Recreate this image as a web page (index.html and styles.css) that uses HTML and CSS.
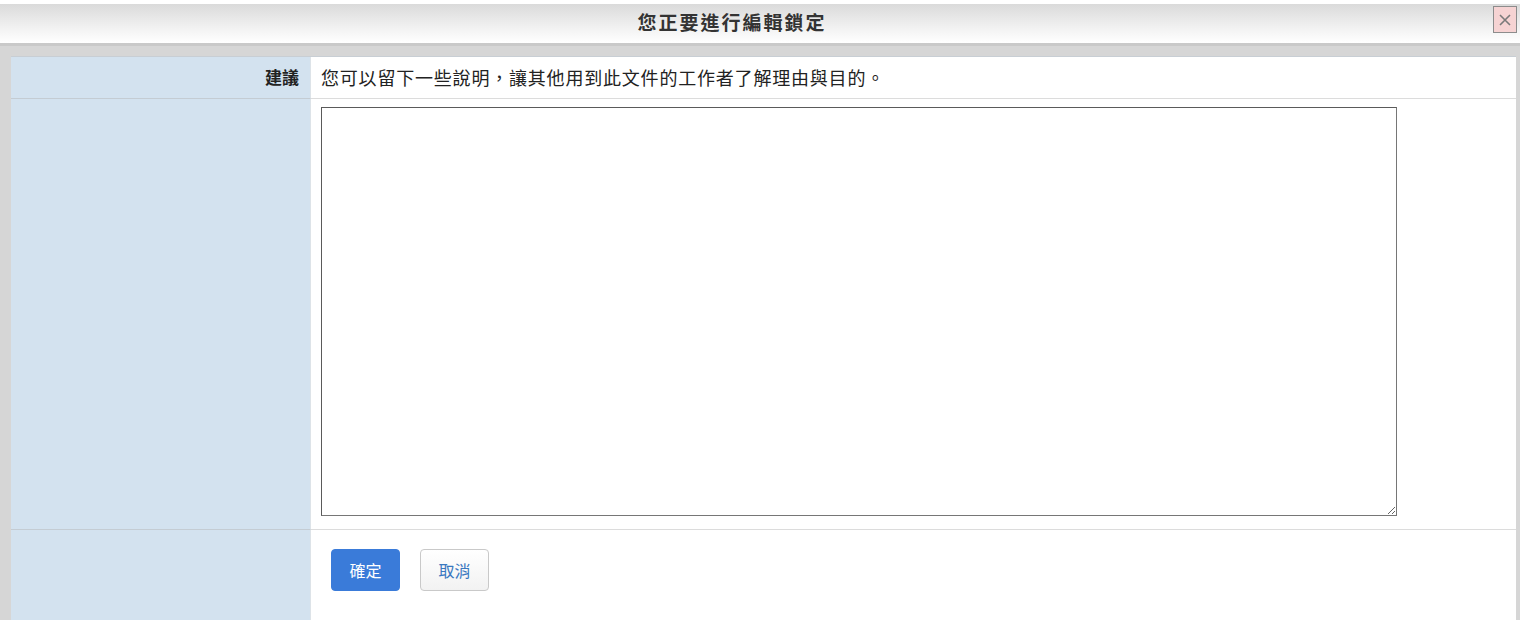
FILE: index.html
```html
<!DOCTYPE html>
<html lang="zh-Hant">
<head>
<meta charset="utf-8">
<title>您正要進行編輯鎖定</title>
<link rel="stylesheet" href="styles.css">
</head>
<body>
<div class="dialog">
  <div class="titlebar">
    <div class="title">您正要進行編輯鎖定</div>
    <button class="close" type="button" aria-label="關閉">
      <svg width="14" height="14" viewBox="0 0 14 14"><path d="M2 2L12 12M12 2L2 12" stroke="#7a7a7a" stroke-width="1.6" fill="none"/></svg>
    </button>
  </div>
  <div class="frame">
    <div class="form">
      <div class="label">建議</div>
      <div class="value hint">您可以留下一些說明，讓其他用到此文件的工作者了解理由與目的。</div>
      <div class="label"></div>
      <div class="value area-cell"><textarea class="note"></textarea></div>
      <div class="label last"></div>
      <div class="value actions last">
        <button class="btn primary" type="button">確定</button>
        <button class="btn secondary" type="button">取消</button>
      </div>
    </div>
  </div>
</div>
</body>
</html>
```
FILE: styles.css
```css
* { box-sizing: border-box; }
html, body {
  margin: 0;
  padding: 0;
  height: 100%;
  overflow: hidden;
  background: #ffffff;
  font-family: "Noto Sans CJK TC", "Noto Sans", sans-serif;
  color: #222;
}
.dialog {
  padding-top: 4px;
  height: 100%;
  display: flex;
  flex-direction: column;
}
.titlebar {
  position: relative;
  flex: 0 0 42px;
  height: 42px;
  background: linear-gradient(#dadada, #f3f3f3 65%, #ffffff);
  display: flex;
  align-items: center;
  justify-content: center;
  padding-right: 56px;
  border-bottom: 3px solid #c9c9c9;
}
.title {
  font-size: 19px;
  font-weight: bold;
  letter-spacing: 2px;
  color: #333;
  line-height: 24px;
  margin-top: -4px;
}
.close {
  position: absolute;
  top: 2px;
  right: 3px;
  width: 24px;
  height: 27px;
  padding: 0;
  margin: 0;
  background: #f6d3d3;
  border: 1px solid #8c8c8c;
  display: flex;
  align-items: center;
  justify-content: center;
}
.frame {
  flex: 1 1 auto;
  min-height: 0;
  background: #d6d6d6;
  padding: 10px 4px 0 11px;
}
.form {
  display: grid;
  grid-template-columns: 300px 1fr;
  height: 100%;
  grid-template-rows: 42px 431px 1fr;
  border-top: 1px solid #c8ced4;
}
.label {
  background: #d3e2ef;
  border-right: 1px solid #dde3e8;
  border-bottom: 1px solid #c4ccd3;
  text-align: right;
  font-size: 17px;
  font-weight: bold;
  padding: 8px 11px 0 0;
  line-height: 24px;
  color: #222;
}
.value {
  background: #ffffff;
  border-bottom: 1px solid #dcdcdc;
}
.last { border-bottom: none; }
.hint {
  font-size: 18px;
  letter-spacing: 0.8px;
  padding: 8px 9px 0 10px;
  line-height: 24px;
  color: #222;
}
.area-cell {
  padding: 8px 0 0 10px;
}
.note {
  display: block;
  width: 1076px;
  height: 409px;
  margin: 0;
  border: 1px solid #767676;
  border-top-color: #5a5a5a;
  border-left-color: #5a5a5a;
  background: #fff;
  resize: both;
  font-family: inherit;
}
.actions {
  display: flex;
  align-items: flex-start;
  gap: 20px;
  padding: 19px 0 0 20px;
}
.btn {
  width: 69px;
  height: 42px;
  border-radius: 4px;
  font-family: "Noto Sans CJK TC", "Noto Sans", sans-serif;
  font-size: 16px;
  padding: 0;
  margin: 0;
  line-height: 1;
}
.primary {
  background: #3a7bd9;
  border: 1px solid #3a7bd9;
  color: #ffffff;
}
.secondary {
  background: linear-gradient(#ffffff, #f2f2f2);
  border: 1px solid #c9c9c9;
  color: #3a78c0;
}
```
